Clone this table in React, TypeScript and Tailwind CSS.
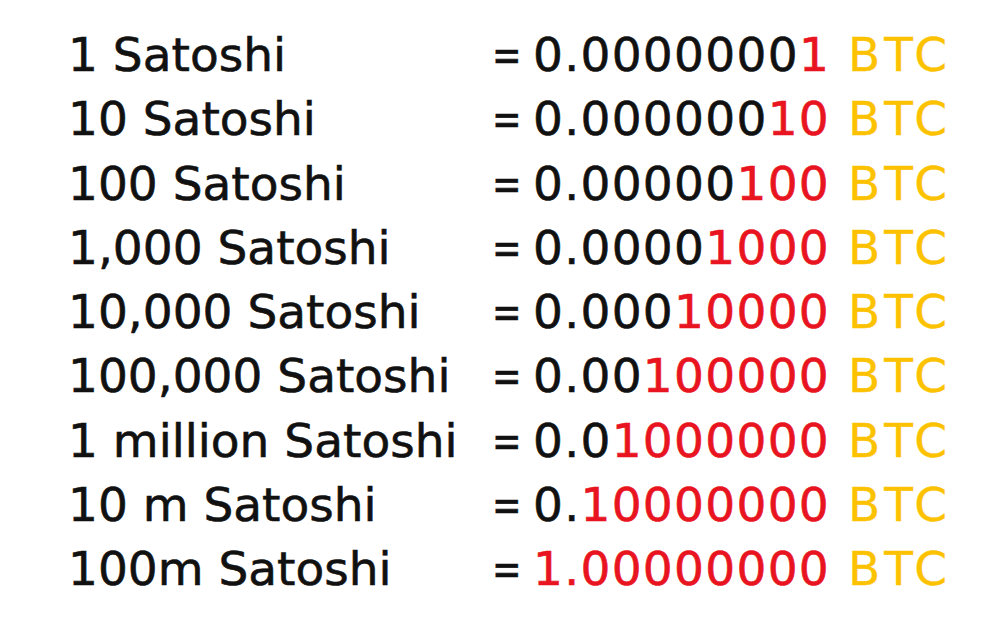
const rows = [
  { label: "1 Satoshi", black: "0.0000000", red: "1" },
  { label: "10 Satoshi", black: "0.000000", red: "10" },
  { label: "100 Satoshi", black: "0.00000", red: "100" },
  { label: "1,000 Satoshi", black: "0.0000", red: "1000" },
  { label: "10,000 Satoshi", black: "0.000", red: "10000" },
  { label: "100,000 Satoshi", black: "0.00", red: "100000" },
  { label: "1 million Satoshi", black: "0.0", red: "1000000" },
  { label: "10 m Satoshi", black: "0.", red: "10000000" },
  { label: "100m Satoshi", black: "", red: "1.00000000" },
]

export default function App() {
  return (
    <div className="w-[1000px] h-[629px] bg-white overflow-hidden pt-[23px] pl-[68px] font-['DejaVu_Sans','Liberation_Sans',sans-serif] text-[47px] text-[#111] leading-[64.25px] [-webkit-text-stroke:0.6px]">
      <div className="grid grid-cols-[424px_1fr]">
        {rows.map((r) => (
          <div key={r.label} className="contents">
            <div className="whitespace-nowrap h-[64.25px]">{r.label}</div>
            <div className="whitespace-nowrap h-[64.25px]">
              <span className="inline-block w-[41px] scale-x-75 origin-left">=</span>
              <span className="tracking-[1.3px]">{r.black}</span>
              <span className="tracking-[1.3px] text-[#e8141f]">{r.red}</span>
              <span className="text-[#fcc200] ml-[18px] tracking-[4px] [-webkit-text-stroke:0.3px]">BTC</span>
            </div>
          </div>
        ))}
      </div>
    </div>
  )
}
